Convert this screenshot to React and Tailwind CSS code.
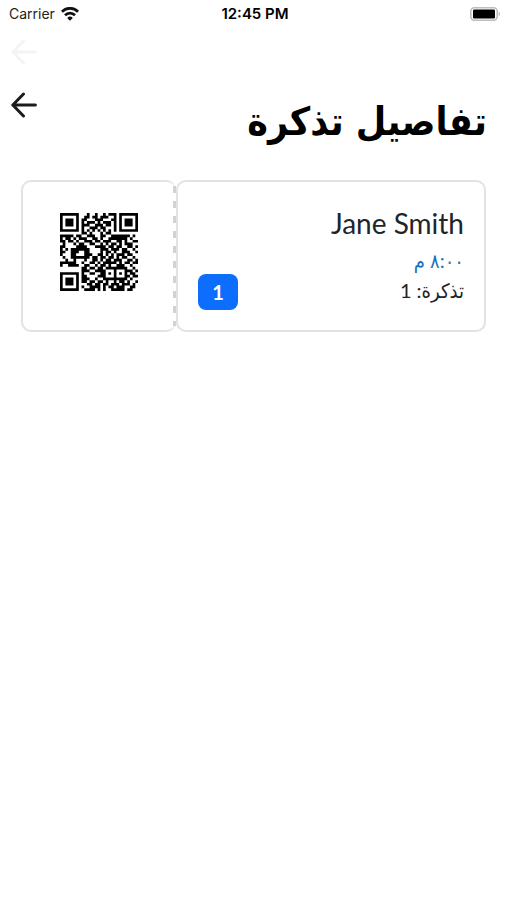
import React from 'react';

const qrRows = [
    '11111110001001001011101111111',
    '10000010011011011100101000001',
    '10111010110001110001101011101',
    '10111010101110101110101011101',
    '10111010111001110110101011101',
    '10000010100111011000101000001',
    '11111110101010101010101111111',
    '00000000110100010110000000000',
    '11111011001110011001111111010',
    '10110101110011010011111110100',
    '11011010011101101110011010011',
    '01000101100110010101101011100',
    '11000011110001111011011001101',
    '10101111111000011101110110010',
    '11001110011000010110100111001',
    '10001100011100110101011101100',
    '01001111111011011011010110010',
    '00100100010011010110111001101',
    '11111100100110101111101011011',
    '10011110011001011010011100100',
    '00000000110110110111111110010',
    '00000000111001111000100011101',
    '11111110100110011010101010110',
    '10000010110000111000100011011',
    '10111010111001001111111110100',
    '10111010110110110100101101001',
    '10111010001101101101110111010',
    '10000010100111101011011100110',
    '11111110011110101001111101100',
];

const qrPath = qrRows
    .map((row, y) => row.split('').map((cell, x) => (cell === '1' ? `M${x} ${y}h1v1h-1z` : '')).join(''))
    .join('');

const QrCode = () => (
    <svg className="h-[78px] w-[78px]" viewBox="0 0 29 29" role="img" aria-label="QR">
        <path d={qrPath} fill="#000" />
    </svg>
);

const WifiIcon = () => (
    <svg className="h-[14px] w-[18px]" viewBox="0 0 18 14" fill="none" stroke="#111" strokeWidth="2.7">
        <path d="M0.9 4.7a11.4 11.4 0 0 1 16.2 0" />
        <path d="M4 8.2a7 7 0 0 1 10 0" />
        <path d="M9 13.8L6.2 10.9a4 4 0 0 1 5.6 0z" fill="#111" stroke="none" />
    </svg>
);

const BatteryIcon = () => (
    <svg className="h-[14px] w-[31px]" viewBox="0 0 31 14">
        <rect x="0.8" y="0.8" width="26.4" height="12.4" rx="3.6" fill="#fff" stroke="#bdbdbd" strokeWidth="1.6" />
        <rect x="3" y="2.6" width="22" height="8.8" rx="1.2" fill="#000" />
        <path d="M28.6 4.8c1.8.6 1.8 3.8 0 4.4z" fill="#bdbdbd" />
    </svg>
);

const ArrowIcon = () => (
    <svg className="h-[26px] w-[26px]" viewBox="0 0 26 26" fill="none" stroke="currentColor" strokeWidth="3" strokeLinecap="round" strokeLinejoin="round">
        <path d="M12.5 2L1.8 13l10.7 11M1.8 13h22.6" />
    </svg>
);

const StatusBar = () => (
    <div className="grid h-7 grid-cols-3 items-center pl-[9px] pr-1.5 font-['Inter',sans-serif] text-sm">
        <div className="flex items-center gap-1.5 text-[#222]">
            <span>Carrier</span>
            <WifiIcon />
        </div>
        <div className="text-center text-[15px] font-semibold text-black">12:45 PM</div>
        <div className="flex justify-end">
            <BatteryIcon />
        </div>
    </div>
);

const Ticket = ({ name, time, count }) => (
    <article className="mx-[21px] mt-7 flex h-[152px]">
        <div className="relative flex w-1/3 items-center justify-center rounded-[10px] border-2 border-r-0 border-[#e2e2e2] pb-2">
            <QrCode />
            {/* perforated edge */}
            <div className="absolute inset-y-1 right-0 w-[3px] bg-[repeating-linear-gradient(to_bottom,#d2d2d2_0_7px,transparent_7px_15px)]"></div>
        </div>
        <div className="flex flex-1 items-end justify-between rounded-[10px] border-2 border-[#e2e2e2] px-5 py-5">
            <span className="flex h-9 w-10 items-center justify-center rounded-lg bg-[#0d6efd] font-['Lato',sans-serif] text-xl font-bold text-white">
                {count}
            </span>
            <div dir="rtl" className="self-start font-['Lato','DejaVu_Sans_Condensed','DejaVu_Sans',sans-serif] text-[#212529]">
                <h2 dir="ltr" className="text-[28px] leading-[42px]">{name}</h2>
                <p className="text-xl leading-8 text-[#1a73b8]">{time}</p>
                <p className="text-xl leading-7">تذكرة: {count}</p>
            </div>
        </div>
    </article>
);

export default function App() {
    return (
        <div className="min-h-screen bg-white">
            <StatusBar />
            <div className="flex h-12 items-center px-[11px] text-[#f4f4f4]">
                <ArrowIcon />
            </div>
            <header className="flex items-start justify-between pl-[11px] pr-5 pt-4">
                <button type="button" aria-label="رجوع" className="text-[#1c1c1c]">
                    <ArrowIcon />
                </button>
                <h1 dir="rtl" className="font-['DejaVu_Sans_Condensed','DejaVu_Sans',sans-serif] text-[39px] font-bold leading-[60px] text-black">
                    تفاصيل تذكرة
                </h1>
            </header>
            <main>
                <Ticket name="Jane Smith" time="٨:٠٠ م" count={1} />
            </main>
        </div>
    );
}
